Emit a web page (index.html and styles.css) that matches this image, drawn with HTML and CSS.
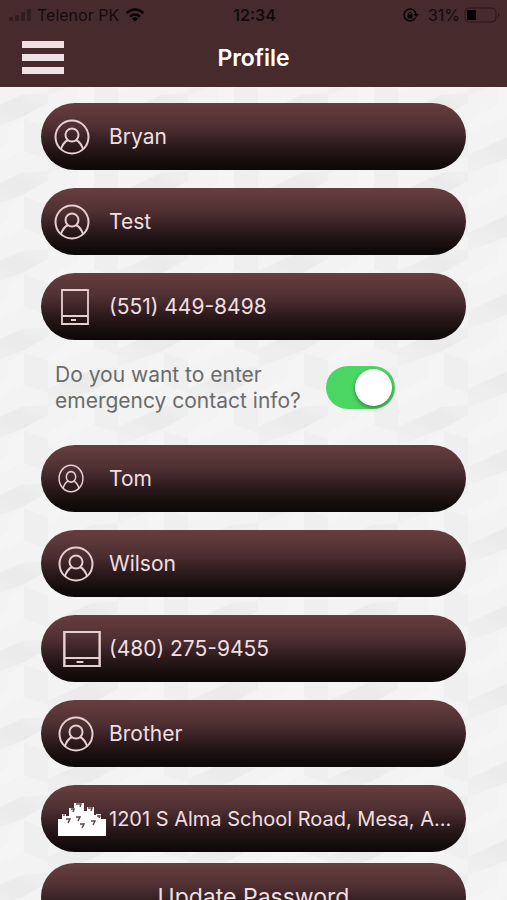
FILE: index.html
```html
<!DOCTYPE html>
<html lang="en">
<head>
<meta charset="utf-8">
<meta name="viewport" content="width=device-width, initial-scale=1">
<title>Profile</title>
<link rel="stylesheet" href="styles.css">
</head>
<body>
<svg class="defs" aria-hidden="true">
  <symbol id="person" viewBox="0 0 36 36" preserveAspectRatio="none">
    <g fill="none" stroke="currentColor" stroke-width="2">
      <circle cx="18" cy="18" r="16.5"/>
      <circle cx="18" cy="16" r="6.5"/>
      <path d="M7 30C8.500 25.500 11 22.500 14 21M29 30C27.500 25.500 25 22.500 22 21"/>
    </g>
  </symbol>
  <symbol id="tablet" viewBox="0 0 28 36" preserveAspectRatio="none">
    <path d="M1 1H27V35H1ZM1 27H27" fill="none" stroke="currentColor" stroke-width="1.800"/>
    <path d="M10 31H15" stroke="currentColor" stroke-width="2"/>
  </symbol>
</svg>
<div class="app">
  <header class="top">
    <div class="status">
      <div class="carrier">
        <svg width="22" height="12" viewBox="0 0 22 12" fill="#321d1f" aria-hidden="true"><rect y="8" width="4" height="4" rx="1"/><rect x="6" y="6" width="4" height="6" rx="1"/><rect x="12" y="3" width="4" height="9" rx="1"/><rect x="18" width="4" height="12" rx="1"/></svg>
        <span>Telenor PK</span>
        <svg width="20" height="14" viewBox="0 0 20 14" fill="none" stroke="#080405" stroke-width="2.600" aria-hidden="true"><path d="M1.500 5Q10 -2 18.500 5M5 8.500Q10 4.500 15 8.500"/><path d="M10 13.500L6.800 10.500Q10 8.200 13.200 10.500Z" fill="#080405" stroke="none"/></svg>
      </div>
      <time class="clock">12:34</time>
      <div class="power">
        <svg width="16" height="14" viewBox="0 0 16 14" aria-hidden="true"><path d="M12.500 9.500A6 6 0 1 1 13 6" fill="none" stroke="#080405" stroke-width="1.500"/><path d="M10.500 6H16L13.200 9Z" fill="#080405"/><rect x="4.500" y="6.500" width="5" height="4" fill="#080405"/><path d="M5.500 7V5.500Q7 3 8.500 5.500V7" fill="none" stroke="#080405"/></svg>
        <span class="percent">31%</span>
        <svg width="36" height="16" viewBox="0 0 36 16" aria-hidden="true"><rect x="1" y="1" width="31" height="14" rx="4" fill="none" stroke="#2b181a"/><rect x="3" y="3" width="9" height="10" rx="1" fill="#030101"/><path d="M34 5.500Q37 8 34 10.500Z" fill="#2b181a"/></svg>
      </div>
    </div>
    <nav class="bar">
      <button class="menu" type="button" aria-label="Menu"><i></i><i></i><i></i></button>
      <h1>Profile</h1>
    </nav>
  </header>
  <main class="content">
    <svg class="backdrop" aria-hidden="true">
      <defs>
        <linearGradient id="fade" x1="0" y1="1" x2="1" y2="0">
          <stop offset="0" stop-color="#f0f0f0"/>
          <stop offset="0.600" stop-color="#e8e8e8"/>
          <stop offset="1" stop-color="#eeeeee"/>
        </linearGradient>
        <g id="block">
          <path d="M0 22L44 2L70 0L70 10L44 24L0 40Z" fill="url(#fade)"/>
          <path d="M30 34L46 26V58L0 78V66L30 50Z" fill="#f7f7f7"/>
          <path d="M46 26L70 34V66L46 58Z" fill="#eeeeee"/>
        </g>
        <pattern id="weave" width="140" height="78" patternUnits="userSpaceOnUse" patternTransform="translate(-22 6)">
          <use href="#block"/>
          <use href="#block" x="70" y="40"/>
          <use href="#block" x="70" y="-38"/>
        </pattern>
      </defs>
      <rect width="100%" height="100%" fill="url(#weave)"/>
    </svg>
    <form class="form">
      <label class="field"><svg class="icon round"><use href="#person"/></svg><input type="text" value="Bryan" aria-label="First name"></label>
      <label class="field"><svg class="icon round"><use href="#person"/></svg><input type="text" value="Test" aria-label="Last name"></label>
      <label class="field"><svg class="icon phone"><use href="#tablet"/></svg><input type="tel" value="(551) 449-8498" aria-label="Phone"></label>
      <div class="ask">
        <label for="emergency">Do you want to enter emergency contact info?</label>
        <input class="switch" id="emergency" type="checkbox" checked>
      </div>
      <label class="field"><svg class="icon small"><use href="#person"/></svg><input type="text" value="Tom" aria-label="Contact first name"></label>
      <label class="field"><svg class="icon round inset"><use href="#person"/></svg><input type="text" value="Wilson" aria-label="Contact last name"></label>
      <label class="field"><svg class="icon wide"><use href="#tablet"/></svg><input type="tel" value="(480) 275-9455" aria-label="Contact phone"></label>
      <label class="field"><svg class="icon round inset"><use href="#person"/></svg><input type="text" value="Brother" aria-label="Relationship"></label>
      <label class="field address"><svg class="icon city" viewBox="0 0 48 34"><path d="M0 17H4V12H8V14H11V6H16V1H26V9H29V5H36V13H38V12H43V17H48V34H0Z" fill="#fff"/><path d="M18 2H23L22 5M13 7H16L15 10M30 6H34L33 9M8 17H12L10 21M18 15H22L20 19M22 22H26L24 26M33 19H37L35 23M39 14H42L41 16M5 13H7" fill="none" stroke="#5b4a4c" stroke-width="1.500"/></svg><input type="text" value="1201 S Alma School Road, Mesa, A..." aria-label="Address"></label>
      <button class="update" type="button">Update Password</button>
    </form>
  </main>
</div>
</body>
</html>
```
FILE: styles.css
```css
* { box-sizing: border-box; }
body { margin: 0; font-family: Inter, "Liberation Sans", sans-serif; }
input, button { font: inherit; }
.defs { position: absolute; width: 0; height: 0; }
.app { height: 100vh; display: flex; flex-direction: column; background: #f3f3f3; }
.top { background: #472a2c; flex: none; }
.status { display: grid; grid-template-columns: 1fr auto 1fr; align-items: center; height: 30px; padding: 0 7px 0 9px; font-size: 16px; color: #160b0c; }
.carrier, .power { display: flex; align-items: center; gap: 6px; }
.power { justify-content: flex-end; gap: 4px; }
.power svg:first-child { margin-right: 5px; }
.clock { font-weight: 600; }
.bar { display: grid; grid-template-columns: 1fr auto 1fr; align-items: center; height: 57px; padding: 0 22px 2px; }
.bar h1 { margin: 0; font-size: 23px; line-height: 30px; font-weight: 600; color: #fff; }
.menu { width: 42px; padding: 0; border: 0; background: none; display: flex; flex-direction: column; gap: 6px; }
.menu i { height: 7px; width: 100%; background: #eee2e3; }
.content { position: relative; flex: 1; min-height: 0; overflow-y: auto; scrollbar-width: none; }
.backdrop { position: absolute; inset: 0; width: 100%; height: 100%; opacity: 0.7; }
.form { position: relative; display: flex; flex-direction: column; gap: 18px; padding: 16px 41px; }
.field, .update { background: linear-gradient(#673e3f, #4f3032 35%, #2b191b 65%, #120b0b 90%, #0d0808); border-radius: 34px; height: 67px; color: #f0dfe0; font-size: 21px; flex: none; }
.field { display: grid; grid-template-columns: 68px 1fr; align-items: center; }
.field input { width: 100%; min-width: 0; padding: 0; border: 0; outline: 0; background: none; color: inherit; text-overflow: ellipsis; }
.address { font-size: 20px; }
.icon { color: #e6cfd0; margin-left: 13px; }
.round { width: 36px; height: 36px; }
.inset { margin-left: 17px; }
.small { width: 26px; height: 29px; margin-left: 17px; }
.phone { width: 28px; height: 36px; margin-left: 20px; }
.wide { width: 38px; height: 36px; margin-left: 22px; }
.city { width: 48px; height: 34px; margin-left: 17px; }
.ask { display: flex; align-items: center; gap: 19px; height: 69px; padding: 0 14px 10px; color: #6b6b6b; font-size: 21px; line-height: 26px; }
.ask label { width: 252px; }
.switch { appearance: none; flex: none; margin: 0; width: 69px; height: 43px; padding: 3px; border-radius: 22px; background: #4bd663; display: flex; justify-content: flex-end; }
.switch::before { content: ""; width: 37px; height: 37px; border-radius: 50%; background: #fff; box-shadow: 0 2px 4px #0006; }
.switch:not(:checked) { background: #d0d0d0; justify-content: flex-start; }
.update { border: 0; padding: 0; margin-top: -7px; font-size: 23px; }
```
